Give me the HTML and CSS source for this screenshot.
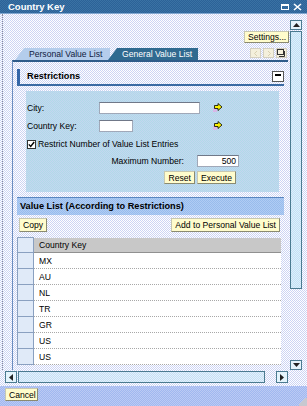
FILE: index.html
```html
<!DOCTYPE html>
<html lang="en">
<head>
    <meta charset="UTF-8">
    <title>Country Key</title>
    <link rel="stylesheet" href="styles.css">
</head>
<body>
<div class="window">
    <div class="titlebar">
        <span class="title">Country Key</span>
        <span class="title-icons">
            <svg width="9" height="8" viewBox="0 0 9 8"><rect x="0.5" y="1.5" width="7" height="5" fill="none" stroke="#fff"/><rect x="0.5" y="1.5" width="7" height="1.5" fill="#fff"/></svg>
            <svg width="9" height="8" viewBox="0 0 9 8"><path d="M1 1 L8 7 M8 1 L1 7" stroke="#fff" stroke-width="1.6"/></svg>
        </span>
    </div>

    <div class="main">
        <div class="pane">
            <div class="settings-row">
                <button class="btn">Settings...</button>
            </div>

            <div class="tab-row">
                <div class="tab tab-active">Personal Value List</div>
                <div class="tab tab-other">General Value List</div>
                <div class="tab-tools">
                    <span class="tool"><svg width="6" height="7" viewBox="0 0 6 7"><path d="M4 1 L1.5 3.5 L4 6" fill="none" stroke="#d8d0b0"/></svg></span>
                    <span class="tool"><svg width="6" height="7" viewBox="0 0 6 7"><path d="M2 1 L4.5 3.5 L2 6" fill="none" stroke="#d8d0b0"/></svg></span>
                    <span class="tool"><svg width="9" height="8" viewBox="0 0 9 8"><rect x="0.5" y="0.5" width="6" height="5" fill="none" stroke="#333"/><path d="M7.5 2 V7.5 H2" fill="none" stroke="#333"/></svg></span>
                </div>
            </div>

            <div class="panel">
                <div class="section-head">
                    <span class="marker"></span>
                    <span class="section-title">Restrictions</span>
                    <span class="minimize"></span>
                </div>

                <div class="restrict">
                    <div class="field-row">
                        <label class="field-label">City:</label>
                        <span class="input input-city"></span>
                        <span class="go"><svg width="10" height="10" viewBox="0 0 10 10"><rect x="0" y="5" width="4" height="4" fill="#d8b8e8"/><path d="M1.5 2.5 H5 V0.5 L9 4 L5 7.5 V5.5 H1.5 Z" fill="#f8f000" stroke="#000" stroke-width="0.8"/></svg></span>
                    </div>
                    <div class="field-row">
                        <label class="field-label">Country Key:</label>
                        <span class="input input-key"></span>
                        <span class="go go-key"><svg width="10" height="10" viewBox="0 0 10 10"><rect x="0" y="5" width="4" height="4" fill="#d8b8e8"/><path d="M1.5 2.5 H5 V0.5 L9 4 L5 7.5 V5.5 H1.5 Z" fill="#f8f000" stroke="#000" stroke-width="0.8"/></svg></span>
                    </div>
                    <div class="check-row">
                        <span class="checkbox"><svg width="7" height="7" viewBox="0 0 7 7"><path d="M0.8 3.4 L2.7 5.5 L6.2 1" fill="none" stroke="#000" stroke-width="1.4"/></svg></span>
                        <span>Restrict Number of Value List Entries</span>
                    </div>
                    <div class="max-row">
                        <label>Maximum Number:</label>
                        <span class="input input-max">500</span>
                    </div>
                    <div class="action-row">
                        <button class="btn">Reset</button>
                        <button class="btn">Execute</button>
                    </div>
                </div>

                <div class="list-head">Value List (According to Restrictions)</div>

                <div class="list-toolbar">
                    <button class="btn">Copy</button>
                    <button class="btn">Add to Personal Value List</button>
                </div>

                <table class="grid">
                    <tr class="grid-head"><td class="sel"></td><td>Country Key</td></tr>
                    <tr><td class="sel"></td><td>MX</td></tr>
                    <tr><td class="sel"></td><td>AU</td></tr>
                    <tr><td class="sel"></td><td>NL</td></tr>
                    <tr><td class="sel"></td><td>TR</td></tr>
                    <tr><td class="sel"></td><td>GR</td></tr>
                    <tr><td class="sel"></td><td>US</td></tr>
                    <tr><td class="sel"></td><td>US</td></tr>
                </table>
            </div>
        </div>

        <div class="vscroll">
            <span class="sbtn"><svg width="7" height="4" viewBox="0 0 7 4"><path d="M0 4 L3.5 0 L7 4 Z" fill="#222"/></svg></span>
            <span class="vthumb"></span>
            <span class="vtrack"></span>
            <span class="sbtn"><svg width="7" height="4" viewBox="0 0 7 4"><path d="M0 0 L3.5 4 L7 0 Z" fill="#222"/></svg></span>
        </div>
    </div>

    <div class="hscroll">
        <span class="sbtn"><svg width="4" height="7" viewBox="0 0 4 7"><path d="M4 0 L0 3.5 L4 7 Z" fill="#222"/></svg></span>
        <span class="hthumb"></span>
        <span class="htrack"></span>
        <span class="sbtn"><svg width="4" height="7" viewBox="0 0 4 7"><path d="M0 0 L4 3.5 L0 7 Z" fill="#222"/></svg></span>
    </div>

    <div class="footer">
        <button class="btn">Cancel</button>
        <span class="grip"></span>
    </div>
</div>
</body>
</html>
```

FILE: styles.css
```css
* {
    box-sizing: border-box;
}
body {
    margin: 0;
    font-family: "Liberation Sans", Arial, sans-serif;
    font-size: 8.6px;
    color: #000;
}
.window {
    width: 307px;
    height: 406px;
    display: flex;
    flex-direction: column;
    overflow: hidden;
    background: repeating-conic-gradient(#ffffff 0 25%, #ccd4f4 0 50%) 0 0 / 2px 2px;
}
.titlebar {
    height: 14px;
    flex: none;
    display: flex;
    align-items: center;
    justify-content: space-between;
    padding: 0 5px 0 8px;
    background: repeating-conic-gradient(#2c6298 0 25%, #3a72a4 0 50%) 0 0 / 2px 2px;
    border-bottom: 1px solid #7fa6d0;
}
.title {
    color: #fff;
    font-weight: bold;
    font-size: 9.5px;
}
.title-icons {
    display: flex;
    gap: 3px;
}
.main {
    height: 356px;
    flex: none;
    display: flex;
    padding-left: 2px;
}
.pane {
    width: 288px;
    display: flex;
    flex-direction: column;
    border-left: 1px dotted #8a8a9a;
    padding: 17px 2px 0 9px;
    min-height: 0;
}
.settings-row {
    display: flex;
    justify-content: flex-end;
    height: 12px;
    margin-right: -1px;
}
.btn {
    font-family: inherit;
    font-size: 8.6px;
    line-height: 10px;
    height: 13px;
    padding: 0 3px;
    background: #fffccc;
    border: 1px solid #8a8a70;
    border-top-color: #c8c8b0;
    border-left-color: #c8c8b0;
    color: #000;
}
.settings-row .btn {
    height: 12px;
    width: 45px;
}
.tab-row {
    display: flex;
    height: 12px;
    margin-top: 5px;
    padding-left: 3px;
}
.tab {
    height: 12px;
    line-height: 13px;
    padding-left: 14px;
    white-space: nowrap;
    clip-path: polygon(9px 0, 100% 0, 100% 100%, 0 100%);
}
.tab-active {
    width: 95px;
    background: #b4cdec;
    color: #102040;
}
.tab-other {
    width: 90px;
    background: #2f6a90;
    color: #fff;
    margin-left: -2px;
}
.tab-tools {
    margin-left: auto;
    display: flex;
    gap: 2px;
    margin-right: 1px;
}
.tool {
    width: 11px;
    height: 10px;
    display: flex;
    align-items: center;
    justify-content: center;
    background: #f4f0dc;
    border: 1px solid #d4d0c0;
}
.panel {
    flex: 1;
    min-height: 0;
    overflow: hidden;
    border-top: 2px solid #2f5c8a;
    border-left: 1px solid #6a8cc0;
    padding: 0 4px;
}
.section-head {
    display: flex;
    align-items: center;
    height: 18px;
    margin-top: 6px;
    border-bottom: 2px solid #3a6aa4;
}
.marker {
    width: 3px;
    height: 15px;
    background: #3466a8;
}
.section-title {
    font-weight: bold;
    font-size: 9.2px;
    margin-left: 7px;
}
.minimize {
    margin-left: auto;
    width: 12px;
    height: 11px;
    background: #fff;
    border: 1px solid #555;
    position: relative;
}
.minimize::after {
    content: "";
    position: absolute;
    left: 2px;
    top: 2px;
    width: 6px;
    height: 2px;
    background: #000;
}
.restrict {
    margin: 5px 5px 0 9px;
    padding: 10px 0 8px 1px;
    background: repeating-conic-gradient(#b0dae8 0 25%, #c4d6f0 0 50%) 0 0 / 2px 2px;
}
.field-row {
    display: flex;
    align-items: center;
    height: 13px;
    margin-bottom: 5px;
}
.field-label {
    width: 72px;
}
.input {
    background: #fff;
    border: 1px solid #a0a8b8;
    border-top-color: #707888;
    height: 12px;
}
.input-city {
    width: 101px;
}
.input-key {
    width: 34px;
}
.go {
    margin-left: 13px;
    display: flex;
}
.go-key {
    margin-left: 80px;
}
.check-row {
    display: flex;
    align-items: center;
    gap: 2px;
    height: 14px;
    margin-top: 1px;
}
.checkbox {
    width: 9px;
    height: 9px;
    background: #fff;
    border: 1px solid #333;
    display: flex;
    align-items: center;
    justify-content: center;
}
.max-row {
    display: flex;
    align-items: center;
    justify-content: flex-end;
    gap: 13px;
    height: 13px;
    margin-top: 3px;
    padding-right: 40px;
}
.input-max {
    width: 42px;
    text-align: right;
    line-height: 10px;
    padding-right: 2px;
}
.action-row {
    display: flex;
    justify-content: flex-end;
    gap: 2px;
    margin-top: 4px;
    padding-right: 43px;
}
.list-head {
    margin-top: 5px;
    height: 18px;
    line-height: 17px;
    padding-left: 3px;
    font-weight: bold;
    font-size: 9.2px;
    border-top: 1px solid #5a86c0;
    background: repeating-conic-gradient(#98bcec 0 25%, #b0ccf4 0 50%) 0 0 / 2px 2px;
}
.list-toolbar {
    display: flex;
    justify-content: space-between;
    margin-top: 3px;
    padding: 0 4px 0 2px;
}
.list-toolbar .btn {
    height: 14px;
}
.grid {
    margin-top: 5px;
    width: 264px;
    border-collapse: collapse;
}
.grid td {
    height: 16px;
    padding: 0 0 0 5px;
    background: #fff;
    border-bottom: 1px dotted #a8a8a8;
}
.grid td.sel {
    width: 16px;
    padding: 0;
    border: 1px solid #8aa0c0;
    background: repeating-conic-gradient(#ffffff 0 25%, #c0d4f0 0 50%) 0 0 / 2px 2px;
}
.grid-head td {
    height: 15px;
    background: repeating-conic-gradient(#b4b4b4 0 25%, #dcdcdc 0 50%) 0 0 / 2px 2px;
    border-bottom: 1px solid #909090;
}
.vscroll {
    width: 12px;
    display: flex;
    flex-direction: column;
    padding-top: 6px;
}
.sbtn {
    width: 12px;
    height: 12px;
    flex: none;
    display: flex;
    align-items: center;
    justify-content: center;
    border: 1px solid #4a7a90;
    background: #e4f4fc;
}
.vscroll .sbtn {
    height: 10px;
}
.vthumb {
    height: 258px;
    margin: 1px 0;
    border: 1px solid #4a7a90;
    background: repeating-conic-gradient(#d8f4fc 0 25%, #c8dcf4 0 50%) 0 0 / 2px 2px;
}
.vtrack {
    flex: 1;
}
.hscroll {
    display: flex;
    height: 12px;
    width: 283px;
    margin-left: 5px;
    margin-top: 1px;
}
.hthumb {
    width: 247px;
    margin: 0 1px;
    border: 1px solid #4a7a90;
    background: repeating-conic-gradient(#e0f4fc 0 25%, #c8dcf4 0 50%) 0 0 / 2px 2px;
}
.htrack {
    flex: 1;
}
.footer {
    flex: 1;
    margin-top: 3px;
    display: flex;
    align-items: flex-start;
    padding: 2px 0 0 5px;
    position: relative;
    background: repeating-conic-gradient(#a0b8f0 0 25%, #bccaf4 0 50%) 0 0 / 2px 2px;
}
.footer .btn {
    width: 33px;
    height: 13px;
}
.grip {
    position: absolute;
    right: 0;
    bottom: 0;
    width: 9px;
    height: 9px;
    background: linear-gradient(135deg, transparent 50%, #c8c8d0 50%);
}
```
